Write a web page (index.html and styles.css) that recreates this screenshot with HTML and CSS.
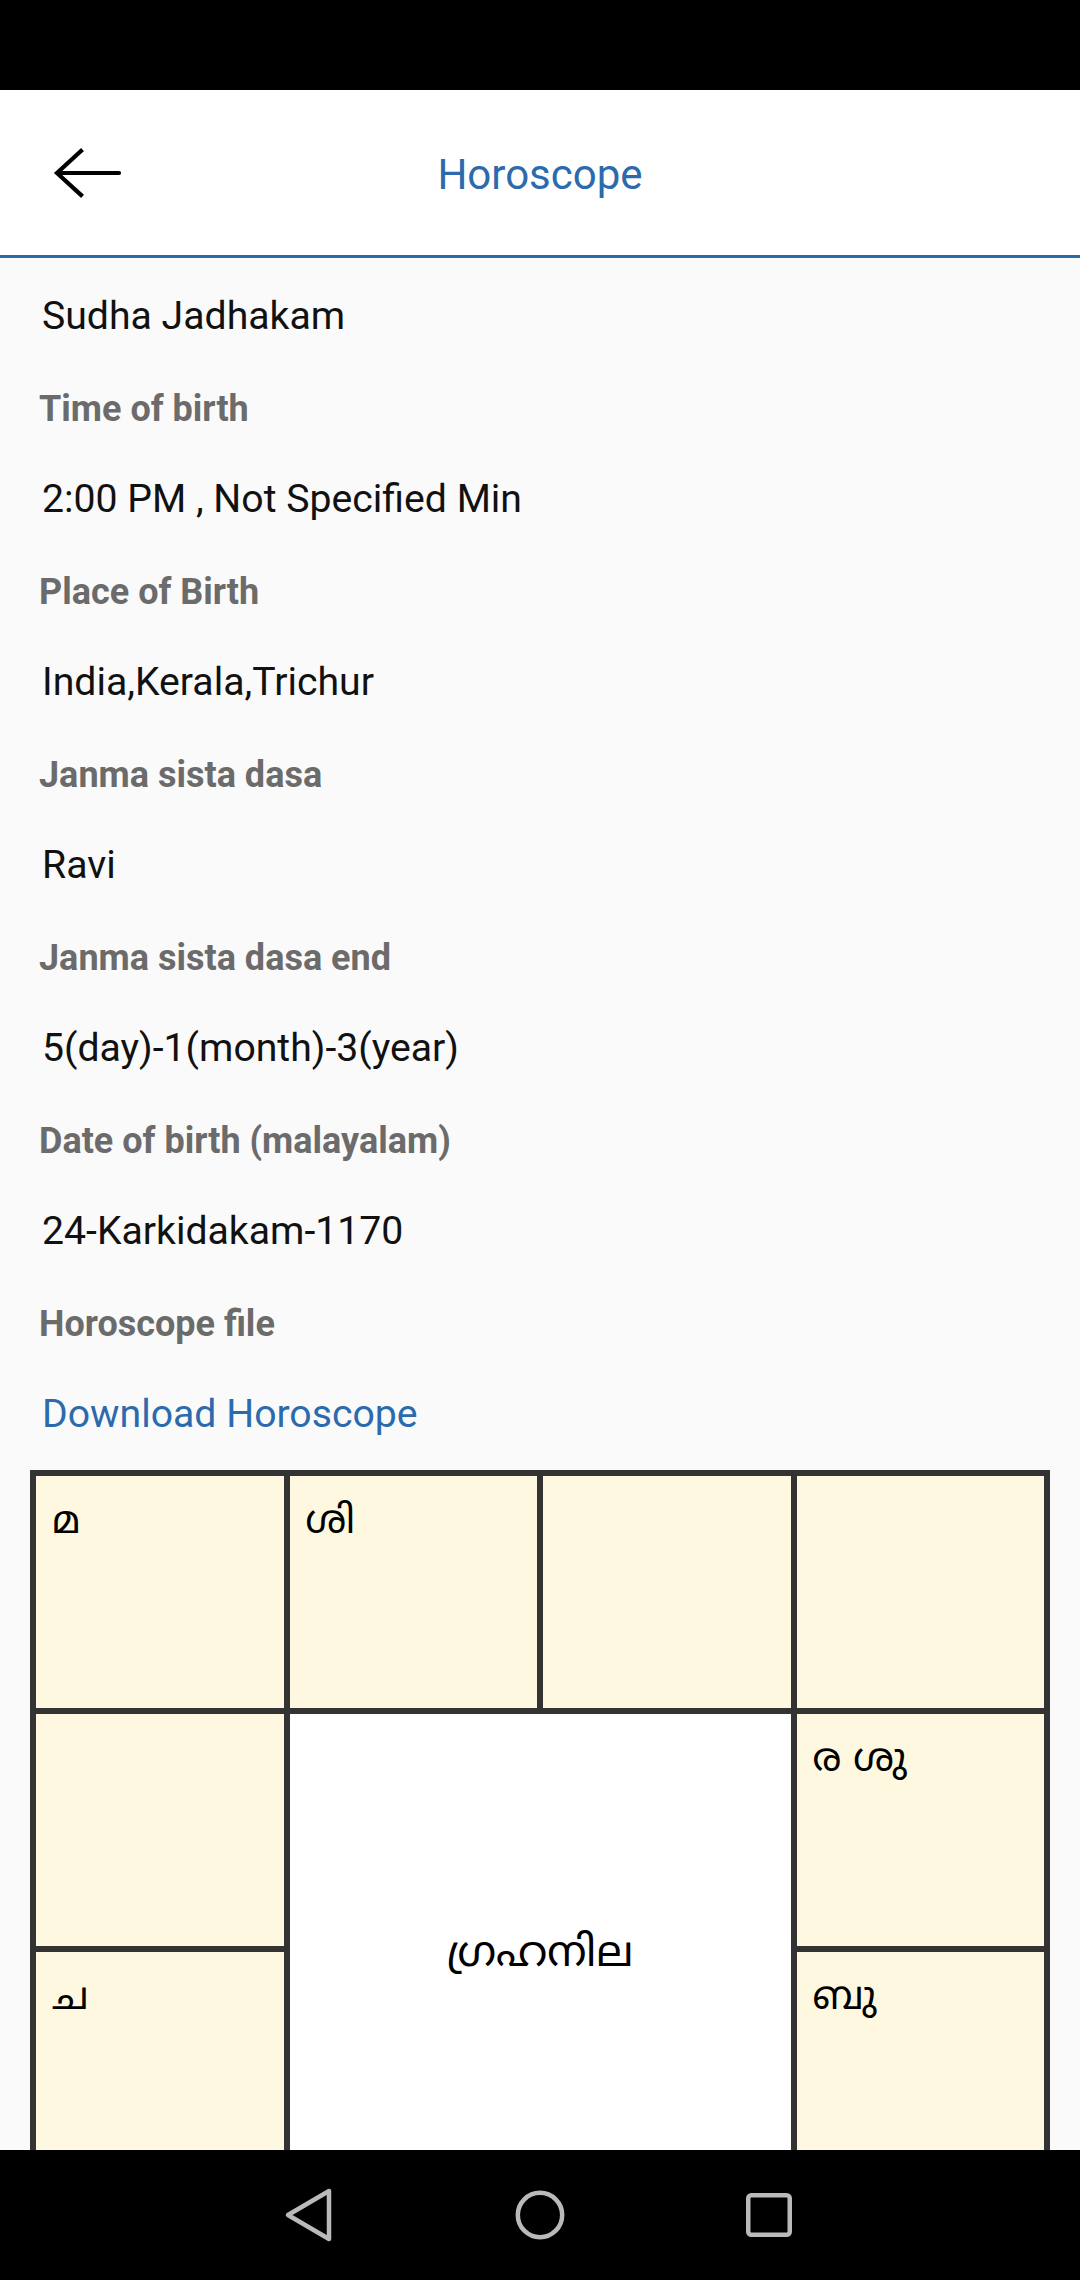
FILE: index.html
```html
<!DOCTYPE html>
<html lang="en">
<head>
<meta charset="utf-8">
<title>Horoscope</title>
<link rel="stylesheet" href="styles.css">
</head>
<body>
<div class="screen">
  <div class="status-bar"></div>
  <header class="app-bar">
    <button class="back" aria-label="Back">
      <svg width="70" height="50" viewBox="0 0 70 50">
        <polyline points="29,3 5,25 29,47" fill="none" stroke="#000" stroke-width="4.2" stroke-linecap="square" stroke-linejoin="miter"/>
        <line x1="6" y1="25" x2="67" y2="25" stroke="#000" stroke-width="4.2" stroke-linecap="round"/>
      </svg>
    </button>
    <h1 class="title">Horoscope</h1>
    <span class="spacer"></span>
  </header>
  <main class="content">
    <div class="details">
      <p class="value">Sudha Jadhakam</p>
      <p class="label">Time of birth</p>
      <p class="value">2:00 PM , Not Specified Min</p>
      <p class="label">Place of Birth</p>
      <p class="value">India,Kerala,Trichur</p>
      <p class="label">Janma sista dasa</p>
      <p class="value">Ravi</p>
      <p class="label">Janma sista dasa end</p>
      <p class="value">5(day)-1(month)-3(year)</p>
      <p class="label">Date of birth (malayalam)</p>
      <p class="value">24-Karkidakam-1170</p>
      <p class="label">Horoscope file</p>
      <p class="value"><a class="link" href="#">Download Horoscope</a></p>
    </div>
    <div class="chart">
      <div class="cell">മ</div>
      <div class="cell">ശി</div>
      <div class="cell"></div>
      <div class="cell"></div>
      <div class="cell"></div>
      <div class="cell center">ഗ്രഹനില</div>
      <div class="cell">ര ശു</div>
      <div class="cell">ച</div>
      <div class="cell">ബു</div>
      <div class="cell"></div>
      <div class="cell"></div>
      <div class="cell"></div>
      <div class="cell"></div>
    </div>
  </main>
  <nav class="nav-bar">
    <span class="nav-icon">
      <svg width="60" height="60" viewBox="0 0 60 60">
        <polygon points="8,30 49,6 49,54" fill="none" stroke="#bababa" stroke-width="4.5" stroke-linejoin="round"/>
      </svg>
    </span>
    <span class="nav-icon">
      <svg width="60" height="60" viewBox="0 0 60 60">
        <circle cx="30" cy="30" r="22.2" fill="none" stroke="#bababa" stroke-width="4.5"/>
      </svg>
    </span>
    <span class="nav-icon">
      <svg width="60" height="60" viewBox="0 0 60 60">
        <rect x="8.25" y="10.25" width="41.5" height="39.5" rx="3" fill="none" stroke="#bababa" stroke-width="4.5"/>
      </svg>
    </span>
  </nav>
</div>
</body>
</html>
```
FILE: styles.css
```css
* {
  box-sizing: border-box;
}

html, body {
  margin: 0;
  padding: 0;
  background: #000;
}

body {
  font-family: Roboto, "Noto Sans", "Liberation Sans", sans-serif;
}

.screen {
  width: 1080px;
  height: 2280px;
  display: flex;
  flex-direction: column;
  overflow: hidden;
  background: #fafafa;
}

.status-bar {
  height: 90px;
  flex: 0 0 90px;
  background: #000;
}

.app-bar {
  flex: 0 0 168px;
  height: 168px;
  background: #fff;
  border-bottom: 3px solid #2b6aaa;
  display: grid;
  grid-template-columns: 1fr auto 1fr;
  align-items: center;
}

.back {
  justify-self: start;
  margin-left: 52px;
  padding: 0;
  border: 0;
  background: transparent;
  width: 70px;
  height: 50px;
  display: flex;
}

.title {
  margin: 0;
  padding-top: 4px;
  font-size: 42px;
  font-weight: 400;
  color: #2b6bad;
  line-height: 1.172;
}

.content {
  flex: 1 1 auto;
  overflow: hidden;
  background: #fafafa;
}

.details {
  padding-top: 13px;
}

.value {
  margin: 0;
  padding-left: 42px;
  font-size: 39.2px;
  line-height: 90px;
  color: #111;
}

.label {
  margin: 0;
  padding-top: 3px;
  padding-left: 39px;
  font-size: 36px;
  font-weight: 700;
  line-height: 90px;
  color: #6b6b6b;
}

.link {
  color: #2b6bad;
  text-decoration: none;
}

.chart {
  margin: 11px 30px 0;
  border: 3px solid #333;
  display: grid;
  grid-template-columns: repeat(4, 1fr);
  grid-auto-rows: 238px;
}

.cell {
  border: 3px solid #333;
  background: #fff8e1;
  padding: 22px 16px 14px;
  font-family: "Noto Sans Malayalam", "Noto Sans", sans-serif;
  font-size: 39px;
  line-height: 52px;
  color: #000;
}

.cell.center {
  grid-column: 2 / span 2;
  grid-row: 2 / span 2;
  background: #fff;
  display: flex;
  align-items: center;
  justify-content: center;
  padding: 14px 0 0;
  font-size: 43px;
}

.nav-bar {
  flex: 0 0 130px;
  height: 130px;
  background: #000;
  display: flex;
  align-items: center;
  justify-content: center;
  gap: 170px;
}

.nav-icon {
  width: 60px;
  height: 60px;
  display: flex;
}
```
